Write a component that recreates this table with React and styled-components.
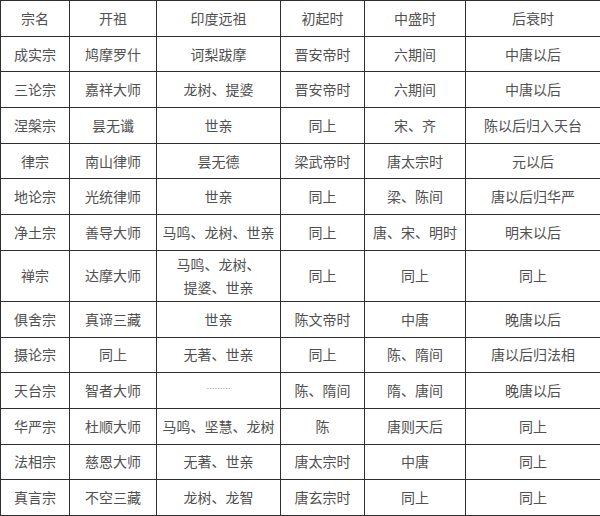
import React from "react";
import styled, { createGlobalStyle } from "styled-components";

const GlobalStyle = createGlobalStyle`
  html, body {
    margin: 0;
    padding: 0;
    background: #ffffff;
  }
  body {
    font-family: "Noto Sans CJK SC", "Noto Sans", sans-serif;
  }
`;

const Table = styled.table`
  width: 600px;
  table-layout: fixed;
  border-collapse: collapse;
  background: #fff;
`;

const Cell = styled.td`
  border: 1.5px solid #2e2e2e;
  height: ${(p) => (p.$tall ? 50 : 34.7)}px;
  padding: 0 2px;
  text-align: center;
  vertical-align: middle;
  font-size: 14px;
  line-height: 23px;
  color: #505050;
  white-space: nowrap;
`;

const Dots = styled.span`
  font-size: 8px;
  letter-spacing: 0;
  color: #8a8a8a;
  position: relative;
  top: -3px;
`;

const widths = [69, 87, 124, 84, 101, 135];

const header = ["宗名", "开祖", "印度远祖", "初起时", "中盛时", "后衰时"];

const rows = [
  ["成实宗", "鸠摩罗什", "诃梨跋摩", "晋安帝时", "六期间", "中唐以后"],
  ["三论宗", "嘉祥大师", "龙树、提婆", "晋安帝时", "六期间", "中唐以后"],
  ["涅槃宗", "昙无谶", "世亲", "同上", "宋、齐", "陈以后归入天台"],
  ["律宗", "南山律师", "昙无德", "梁武帝时", "唐太宗时", "元以后"],
  ["地论宗", "光统律师", "世亲", "同上", "梁、陈间", "唐以后归华严"],
  ["净土宗", "善导大师", "马鸣、龙树、世亲", "同上", "唐、宋、明时", "明末以后"],
  ["禅宗", "达摩大师", ["马鸣、龙树、", "提婆、世亲"], "同上", "同上", "同上"],
  ["俱舍宗", "真谛三藏", "世亲", "陈文帝时", "中唐", "晚唐以后"],
  ["摄论宗", "同上", "无著、世亲", "同上", "陈、隋间", "唐以后归法相"],
  ["天台宗", "智者大师", "dots", "陈、隋间", "隋、唐间", "晚唐以后"],
  ["华严宗", "杜顺大师", "马鸣、坚慧、龙树", "陈", "唐则天后", "同上"],
  ["法相宗", "慈恩大师", "无著、世亲", "唐太宗时", "中唐", "同上"],
  ["真言宗", "不空三藏", "龙树、龙智", "唐玄宗时", "同上", "同上"],
];

const renderValue = (v) => {
  if (v === "dots") return <Dots>………</Dots>;
  if (Array.isArray(v))
    return v.map((line, i) => (
      <React.Fragment key={i}>
        {i > 0 && <br />}
        {line}
      </React.Fragment>
    ));
  return v;
};

export default function App() {
  return (
    <>
      <GlobalStyle />
      <Table>
        <colgroup>
          {widths.map((w, i) => (
            <col key={i} style={{ width: w }} />
          ))}
        </colgroup>
        <tbody>
          <tr>
            {header.map((h) => (
              <Cell key={h}>{h}</Cell>
            ))}
          </tr>
          {rows.map((row, r) => {
            const tall = row.some((v) => Array.isArray(v));
            return (
              <tr key={r}>
                {row.map((v, c) => (
                  <Cell key={c} $tall={tall}>
                    {renderValue(v)}
                  </Cell>
                ))}
              </tr>
            );
          })}
        </tbody>
      </Table>
    </>
  );
}
